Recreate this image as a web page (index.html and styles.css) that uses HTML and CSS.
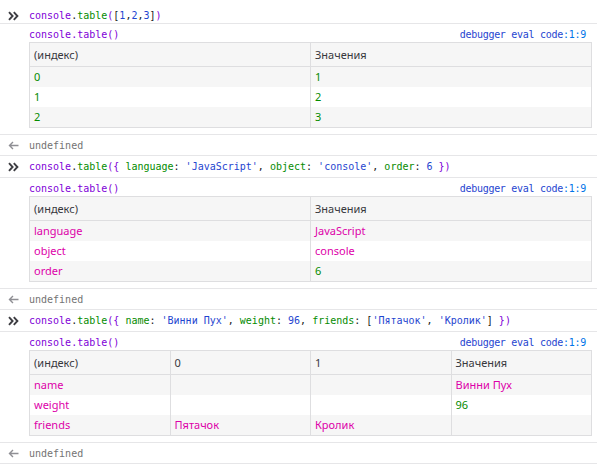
FILE: index.html
```html
<!DOCTYPE html>
<html lang="ru">
<head>
<meta charset="utf-8">
<title>Console</title>
<link rel="stylesheet" href="styles.css">
</head>
<body>
<div class="console">

  <div class="msg input first">
    <span class="icon"><svg width="11" height="10" viewBox="0 0 11 10"><path d="M1 1.2l3.6 3.8L1 8.8M5.8 1.2l3.6 3.8-3.6 3.8" fill="none" stroke="#3d3d42" stroke-width="1.9"/></svg></span>
    <div class="body code"><span class="v">console</span><span class="p">.</span><span class="pr">table</span><span class="v">(</span><span class="p">[</span><span class="n">1</span><span class="p">,</span><span class="n">2</span><span class="p">,</span><span class="n">3</span><span class="p">]</span><span class="v">)</span></div>
  </div>

  <div class="msg output">
    <span class="icon"></span>
    <div class="body">
      <div class="caption code"><span class="v">console.table()</span><span class="loc">debugger eval code<span class="lc">:1:9</span></span></div>
      <div class="grid cols2">
        <div class="row head"><span>(индекс)</span><span>Значения</span></div>
        <div class="row"><span class="num">0</span><span class="num">1</span></div>
        <div class="row"><span class="num">1</span><span class="num">2</span></div>
        <div class="row"><span class="num">2</span><span class="num">3</span></div>
      </div>
    </div>
  </div>

  <div class="msg result">
    <span class="icon"><svg width="11" height="9" viewBox="0 0 11 9"><path d="M10.5 4.5H1.8M5 1L1.5 4.5 5 8" fill="none" stroke="#8f8f94" stroke-width="1.4"/></svg></span>
    <div class="body code undef">undefined</div>
  </div>

  <div class="msg input">
    <span class="icon"><svg width="11" height="10" viewBox="0 0 11 10"><path d="M1 1.2l3.6 3.8L1 8.8M5.8 1.2l3.6 3.8-3.6 3.8" fill="none" stroke="#3d3d42" stroke-width="1.9"/></svg></span>
    <div class="body code"><span class="v">console</span><span class="p">.</span><span class="pr">table</span><span class="v">({</span> <span class="pr">language</span><span class="p">:</span> <span class="s">'JavaScript'</span><span class="p">,</span> <span class="pr">object</span><span class="p">:</span> <span class="s">'console'</span><span class="p">,</span> <span class="pr">order</span><span class="p">:</span> <span class="n">6</span> <span class="v">})</span></div>
  </div>

  <div class="msg output">
    <span class="icon"></span>
    <div class="body">
      <div class="caption code"><span class="v">console.table()</span><span class="loc">debugger eval code<span class="lc">:1:9</span></span></div>
      <div class="grid cols2">
        <div class="row head"><span>(индекс)</span><span>Значения</span></div>
        <div class="row"><span class="str">language</span><span class="str">JavaScript</span></div>
        <div class="row"><span class="str">object</span><span class="str">console</span></div>
        <div class="row"><span class="str">order</span><span class="num">6</span></div>
      </div>
    </div>
  </div>

  <div class="msg result">
    <span class="icon"><svg width="11" height="9" viewBox="0 0 11 9"><path d="M10.5 4.5H1.8M5 1L1.5 4.5 5 8" fill="none" stroke="#8f8f94" stroke-width="1.4"/></svg></span>
    <div class="body code undef">undefined</div>
  </div>

  <div class="msg input">
    <span class="icon"><svg width="11" height="10" viewBox="0 0 11 10"><path d="M1 1.2l3.6 3.8L1 8.8M5.8 1.2l3.6 3.8-3.6 3.8" fill="none" stroke="#3d3d42" stroke-width="1.9"/></svg></span>
    <div class="body code"><span class="v">console</span><span class="p">.</span><span class="pr">table</span><span class="v">({</span> <span class="pr">name</span><span class="p">:</span> <span class="s">'Винни Пух'</span><span class="p">,</span> <span class="pr">weight</span><span class="p">:</span> <span class="n">96</span><span class="p">,</span> <span class="pr">friends</span><span class="p">:</span> <span class="p">[</span><span class="s">'Пятачок'</span><span class="p">,</span> <span class="s">'Кролик'</span><span class="p">]</span> <span class="v">})</span></div>
  </div>

  <div class="msg output">
    <span class="icon"></span>
    <div class="body">
      <div class="caption code"><span class="v">console.table()</span><span class="loc">debugger eval code<span class="lc">:1:9</span></span></div>
      <div class="grid cols4">
        <div class="row head"><span>(индекс)</span><span>0</span><span>1</span><span>Значения</span></div>
        <div class="row"><span class="str">name</span><span></span><span></span><span class="str">Винни Пух</span></div>
        <div class="row"><span class="str">weight</span><span></span><span></span><span class="num">96</span></div>
        <div class="row"><span class="str">friends</span><span class="str">Пятачок</span><span class="str">Кролик</span><span></span></div>
      </div>
    </div>
  </div>

  <div class="msg result">
    <span class="icon"><svg width="11" height="9" viewBox="0 0 11 9"><path d="M10.5 4.5H1.8M5 1L1.5 4.5 5 8" fill="none" stroke="#8f8f94" stroke-width="1.4"/></svg></span>
    <div class="body code undef">undefined</div>
  </div>

</div>
</body>
</html>
```

FILE: styles.css
```css
html, body {
  margin: 0;
  padding: 0;
  background: #ffffff;
}

.console {
  display: flex;
  flex-direction: column;
}

.msg {
  display: flex;
  border-bottom: 1px solid #e6e6e8;
}

.icon {
  flex: 0 0 29px;
  box-sizing: border-box;
  padding-left: 8px;
  height: 15px;
  display: flex;
  align-items: center;
}

.icon svg {
  display: block;
}

.body {
  flex: 1;
  min-width: 0;
  padding-right: 5px;
}

.code {
  font-family: "DejaVu Sans Mono", "Liberation Mono", monospace;
  font-size: 10px;
  line-height: 15px;
  white-space: pre;
  color: #18191a;
}

.input {
  padding: 3px 0 3px;
}

.input.first {
  padding: 8px 0 0;
}

.output {
  padding: 3px 0 6px;
}

.result {
  padding: 3px 0 2px;
}

.v { color: #8000d7; }
.pr { color: #058b00; }
.p { color: #18191a; }
.s { color: #1f45d0; }
.n { color: #1f45d0; }

.undef { color: #737373; }

.caption {
  display: flex;
  justify-content: space-between;
}

.loc {
  color: #1f45d0;
  margin-right: 6px;
  letter-spacing: -0.28px;
}

.lc {
  color: #0074e8;
}

.grid {
  display: grid;
  border-top: 1px solid #dedee0;
  border-left: 1px solid #dedee0;
  border-bottom: 1px solid #dedee0;
  font-family: "Noto Sans", "Open Sans", sans-serif;
  font-size: 11px;
}

.cols2 { grid-template-columns: repeat(2, 1fr); }
.cols4 { grid-template-columns: repeat(4, 1fr); }

.row {
  display: contents;
}

.row > span {
  box-sizing: border-box;
  height: 20px;
  line-height: 20px;
  padding-left: 4px;
  border-right: 1px solid #dedee0;
  white-space: nowrap;
  overflow: hidden;
}

.row:nth-child(even) > span {
  background: #f6f6f6;
}

.row.head > span {
  height: 24px;
  line-height: 23px;
  background: #f6f6f6;
  border-bottom: 1px solid #dedee0;
  color: #38383d;
}

.num { color: #058b00; }
.str { color: #dd00a9; }
```
